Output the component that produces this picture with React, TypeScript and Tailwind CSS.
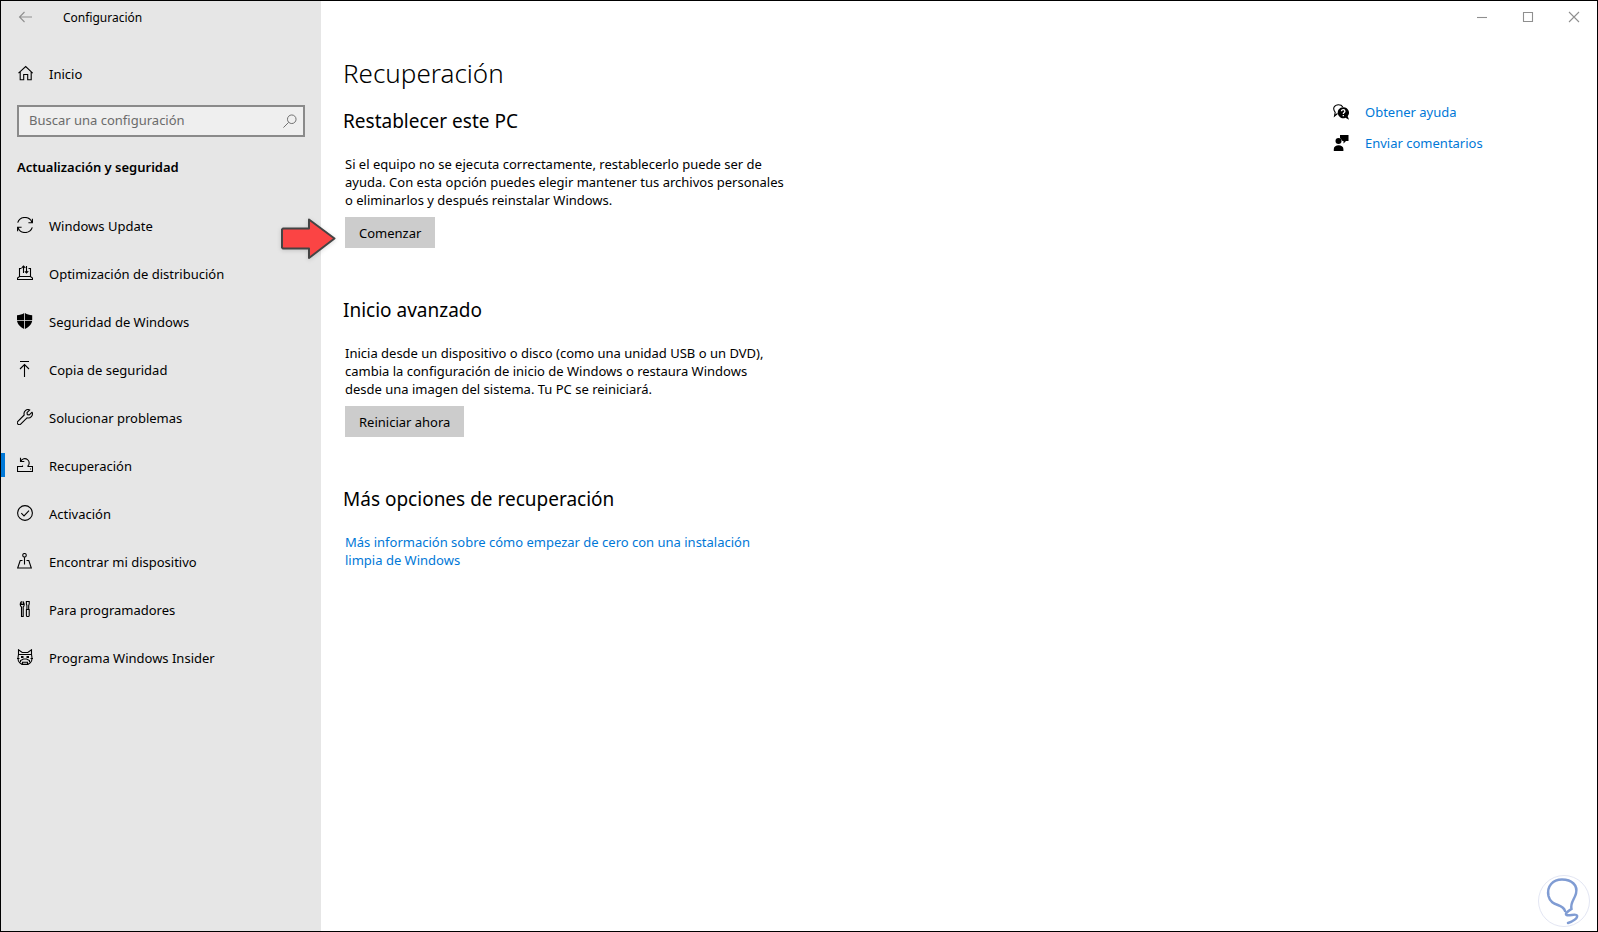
import { useState } from 'react';
import type { ReactNode } from 'react';

const Icon = ({ children, className = 'size-4' }: { children: ReactNode; className?: string }) => (
  <svg viewBox="0 0 16 16" fill="none" stroke="currentColor" strokeWidth="1.1" className={`${className} shrink-0`} aria-hidden="true">
    {children}
  </svg>
);

const menu = [
  {
    label: 'Windows Update',
    icon: (
      <Icon>
        <path d="M.7 5.6A7.6 7.6 0 0 1 15 5.4M15.4 1.8v3.9h-4M15.3 10.4A7.6 7.6 0 0 1 1 10.6M.6 14.2v-3.9h4" />
      </Icon>
    ),
  },
  {
    label: 'Optimización de distribución',
    icon: (
      <Icon>
        <path d="M4.5 3.5h-2v8M13.5 11.5v-8h-2M2.5 11.5h11l2 1.5v1.5H.5V13zM6.5 8V1M4.7 2.8 6.5 1l1.8 1.8M9.5 1v7M7.9 6.4 9.5 8l1.8-1.8" />
      </Icon>
    ),
  },
  {
    label: 'Seguridad de Windows',
    icon: (
      <Icon>
        <path
          fill="currentColor"
          stroke="none"
          d="M7.2 0v7H0V2.2C2.8 2.2 5.2 1.4 7.2 0zM8 0c2 1.4 4.3 2.2 7.2 2.2V7H8zM0 7.8h7.2V16C3.5 14.3.5 11.5 0 7.8zM8 7.8h7.2C14.7 11.5 11.7 14.3 8 16z"
        />
      </Icon>
    ),
  },
  {
    label: 'Copia de seguridad',
    icon: (
      <Icon>
        <path d="M3 .5h9M7.5 16V3.5M3 8l4.5-4.5L12 8" />
      </Icon>
    ),
  },
  {
    label: 'Solucionar problemas',
    icon: (
      <Icon>
        <path
          d="M12.8.9A4.2 4.2 0 0 0 7.2 6L.9 12.3a1.8 1.8 0 0 0 2.800 2.800L10 8.800A4.200 4.200 0 0 0 15.100 3.200L12.300 5.900 10.300 5.600 10 3.700z"
          strokeLinejoin="round"
        />
      </Icon>
    ),
  },
  {
    label: 'Recuperación',
    icon: (
      <Icon>
        <path d="M5.500 8.500v1h-5v5h15v-5h-5M13 12h1M3.500.7v3.800h3.800M3.800 4.200A4.400 4.400 0 1 1 10.500 9.500" />
      </Icon>
    ),
  },
  {
    label: 'Activación',
    icon: (
      <Icon>
        <circle cx="8" cy="8" r="7.4" />
        <path d="m4.3 8.200 2.700 2.700 5-5.200" />
      </Icon>
    ),
  },
  {
    label: 'Encontrar mi dispositivo',
    icon: (
      <Icon>
        <circle cx="7.500" cy="2.300" r="1.800" />
        <path d="M7.500 4.200v7.300M5.500 7.500H3.200L.7 15h13.600l-2.500-7.500H9.500" />
      </Icon>
    ),
  },
  {
    label: 'Para programadores',
    icon: (
      <Icon>
        <path d="M4.500 15.500V6C3 5 2.800 2.500 4.200.9V3.500h2V.9C7.600 2.500 7.400 5 6.200 6v9.500zM9.900 8.500V4.500L9.400 3V.5h2.800V3l-.5 1.500v4M8.900 8.500h3.800M9.400 8.500v6c0 1.400 2.800 1.400 2.800 0v-6" />
      </Icon>
    ),
  },
  {
    label: 'Programa Windows Insider',
    icon: (
      <Icon>
        <path d="M1.500 5.500V.8L5.200 3.500h5.600L14.500.8v4.700M1.500 5.500h13M1.500 5.500C1 8 .3 12 2.500 13.500L5 15.400h6l2.500-1.900c2.200-1.500 1.500-5.500 1-8M0 9.500h2.500M13.500 9.500H16M3.500 13V11.500L6.500 10h3l3 1.500V13M5.500 15v-1.800h5V15" />
        <path d="M4 8h2.500M9.500 8H12" strokeWidth="1.800" />
      </Icon>
    ),
  },
];

const Section = ({ title, children }: { title: string; children: ReactNode }) => (
  <section className="mb-12">
    <h2 className="text-[19px] leading-7">{title}</h2>
    <div className="mt-5 ml-0.5 max-w-[440px] leading-[18px]">{children}</div>
  </section>
);

const ActionButton = ({ children }: { children: ReactNode }) => (
  <button className="block h-[31px] bg-[#cccccc] px-[14px] text-center hover:bg-[#bdbdbd]">{children}</button>
);

const App = () => {
  const [active, setActive] = useState('Recuperación');
  const [search, setSearch] = useState('');

  return (
    <div className="relative flex min-h-screen border border-black bg-white font-['Noto_Sans','Open_Sans',sans-serif] text-[13px] text-black">
      <aside className="w-80 shrink-0 bg-[#e6e6e6]">
        <div className="flex h-8 items-center gap-[30px] pl-4">
          <button aria-label="Atrás" className="text-[#8f8f8f]">
            <Icon>
              <path d="M15 8H2.500M7.500 3 2.500 8l5 5" />
            </Icon>
          </button>
          <span className="pt-0.5 text-[12px]">Configuración</span>
        </div>

        <a href="#inicio" className="mt-4 flex h-12 items-center gap-4 pl-4">
          <Icon>
            <path d="M1.500 8.200 8.700 1.500l7 6.700M3.200 6.800v8h3.500V9.500h4v5.300h3.500v-8" />
          </Icon>
          <span className="pt-[3px]">Inicio</span>
        </a>

        <label className="mx-4 mt-2 flex h-8 items-center border-2 border-[#8a8a8a] bg-[#efefef] pr-1.5 pl-[10px]">
          <input
            aria-label="Buscar una configuración"
            placeholder="Buscar una configuración"
            value={search}
            onChange={(e) => setSearch(e.target.value)}
            className="min-w-0 flex-1 bg-transparent outline-none placeholder:text-[#6b6b6b]"
          />
          <Icon className="size-3.5 text-[#6b6b6b]">
            <circle cx="10" cy="6" r="4.900" />
            <path d="M6.500 9.500.5 15.500" />
          </Icon>
        </label>

        <h3 className="mt-5 pl-4 leading-5 font-semibold">Actualización y seguridad</h3>

        <nav className="mt-6">
          {menu.map((item) => (
            <button
              key={item.label}
              onClick={() => setActive(item.label)}
              className="flex h-12 w-full items-center text-left hover:bg-[#dadada]"
            >
              <span className={`mr-3 h-6 w-1 ${active === item.label ? 'bg-[#0078d7]' : 'bg-transparent'}`} />
              {item.icon}
              <span className="ml-4 pt-[3px]">{item.label}</span>
            </button>
          ))}
        </nav>
      </aside>

      <div className="flex min-w-0 flex-1 flex-col">
        <div className="flex h-8 justify-end text-[#8f8f8f]">
          <button aria-label="Minimizar" className="flex w-[46px] items-center justify-center">
            <Icon>
              <path d="M3 8.500h10" />
            </Icon>
          </button>
          <button aria-label="Maximizar" className="flex w-[46px] items-center justify-center">
            <Icon>
              <path d="M3.500 3.500h9v9h-9z" />
            </Icon>
          </button>
          <button aria-label="Cerrar" className="flex w-[46px] items-center justify-center">
            <Icon>
              <path d="m3 3 10 10M13 3 3 13" />
            </Icon>
          </button>
        </div>

        <div className="flex flex-1">
          <main className="min-w-0 flex-1 pt-5 pl-[22px]">
            <h1 className="mb-3.5 text-[26px] leading-10 font-light">Recuperación</h1>

            <Section title="Restablecer este PC">
              <p className="mb-2">
                Si el equipo no se ejecuta correctamente, restablecerlo puede ser de ayuda. Con esta opción puedes elegir mantener
                tus archivos personales o eliminarlos y después reinstalar Windows.
              </p>
              <div className="relative">
                <ActionButton>Comenzar</ActionButton>
                <svg viewBox="0 0 56 42" className="absolute top-px right-full mr-2 h-[42px] w-14 drop-shadow-sm" aria-hidden="true">
                  <path
                    d="M1 11.500 2 10.500h26V1.500L53.500 20.500 28 40V30.500H2l-1-1z"
                    fill="#fb4444"
                    stroke="#444"
                    strokeWidth="2"
                    strokeLinejoin="round"
                  />
                </svg>
              </div>
            </Section>

            <Section title="Inicio avanzado">
              <p className="mb-2">
                Inicia desde un dispositivo o disco (como una unidad USB o un DVD), cambia la configuración de inicio de Windows o
                restaura Windows desde una imagen del sistema. Tu PC se reiniciará.
              </p>
              <ActionButton>Reiniciar ahora</ActionButton>
            </Section>

            <Section title="Más opciones de recuperación">
              <a href="#instalacion-limpia" className="text-[#0078d7] hover:text-[#666]">
                Más información sobre cómo empezar de cero con una instalación limpia de Windows
              </a>
            </Section>
          </main>

          <div className="flex w-[264px] shrink-0 flex-col items-start gap-[11px] pt-[69px] leading-5 text-[#0078d7]">
            <a href="#ayuda" className="flex items-center gap-4">
              <Icon className="size-4 text-black">
                <path d="M4.500 9.500 1.500 12l.7-3.700C-1 4.500 1.500.7 5.500.7c2 0 3.500.8 4.300 2.200" />
                <path d="M10 3.200a5.500 5.500 0 1 0 2.500 10.500L16 15.800l-1.300-3.600A5.500 5.500 0 0 0 10 3.200z" fill="currentColor" stroke="none" />
                <path d="M8.500 7.200c0-2.200 3.400-2.200 3.400 0 0 1.300-1.600 1.300-1.600 2.700M10.300 11v1.200" stroke="#fff" strokeWidth="1.300" />
              </Icon>
              Obtener ayuda
            </a>
            <a href="#comentarios" className="flex items-center gap-4">
              <Icon className="size-4 text-black">
                <g fill="currentColor" stroke="none">
                  <path d="M7 0h8.500v6h-2.500l-2.500 2.500V6H9.500L7 3z" />
                  <circle cx="5.500" cy="6" r="3" />
                  <path d="M.8 16v-2c0-5 9.600-5 9.600 0v2z" />
                </g>
              </Icon>
              Enviar comentarios
            </a>
          </div>
        </div>
      </div>

      <svg viewBox="0 0 52 52" fill="none" className="absolute right-[7px] bottom-1 size-[52px]" aria-hidden="true">
        <circle cx="26" cy="26" r="25.500" fill="#fff" stroke="#e3e6f3" />
        <path
          d="M27 36C25 28 13 32 10.500 21 8.500 11 15 4.500 24 4.500c10 0 16 6 14 14-1.500 6-6 9-4.500 15.500-3 2-7 4.500-5 6 2.500 1.500 9.500-2 10.500.5 1 2.500-4 6-9 7.500"
          stroke="#809cd3"
          strokeWidth="2.500"
          strokeLinecap="round"
        />
      </svg>
    </div>
  );
};

export default App;
